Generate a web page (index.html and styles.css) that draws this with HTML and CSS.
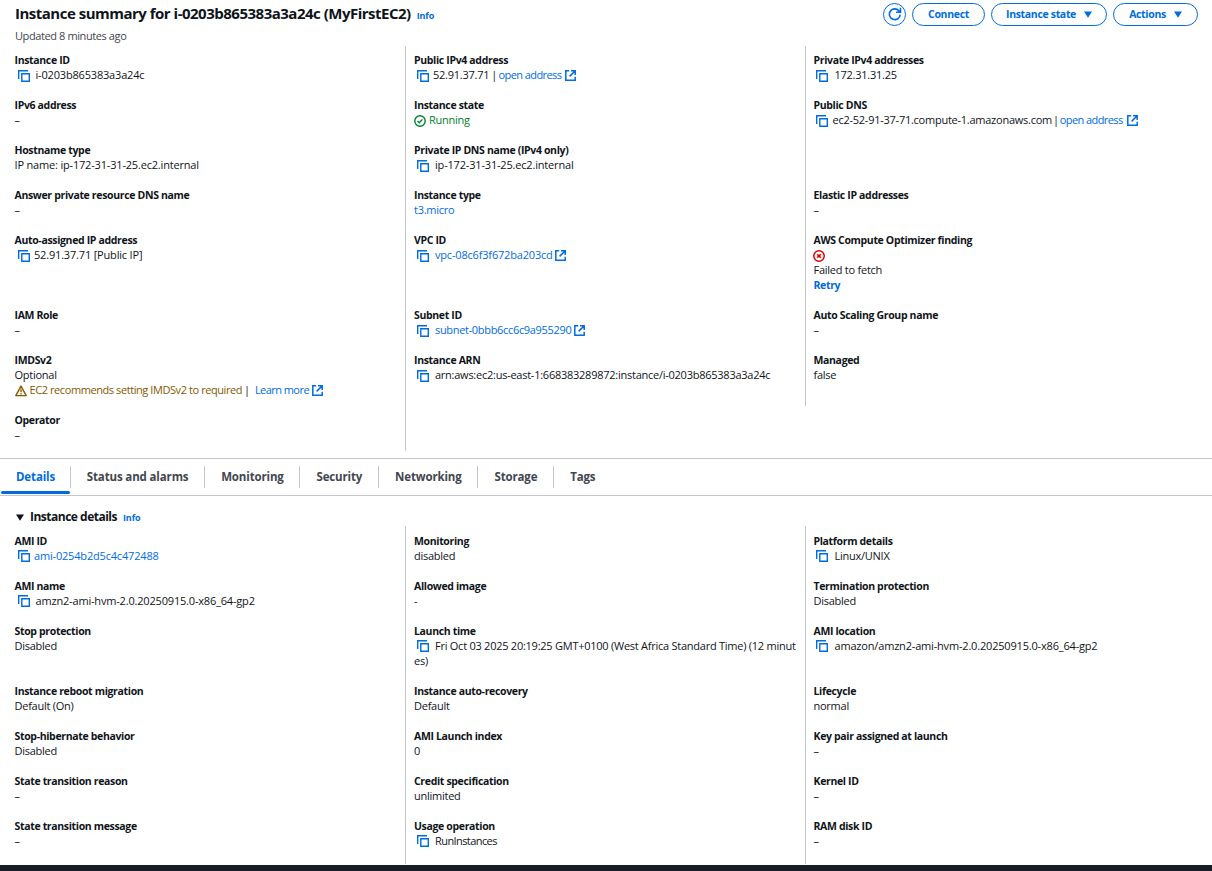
FILE: index.html
```html
<!DOCTYPE html>
<html lang="en">
<head>
<meta charset="utf-8">
<title>Instance summary</title>
<link rel="stylesheet" href="styles.css">
</head>
<body>
<svg class="sprite" aria-hidden="true">
  <symbol id="copy" viewBox="0 0 12 12"><path d="M.7 9V.7H10M3.8 3.8h7.5v7.5H3.8z" fill="none" stroke="currentColor" stroke-width="1.4"/></symbol>
  <symbol id="ext" viewBox="0 0 11 11"><path d="M4.2.8H.8v9.4h9.4V6.8M6 .8h4.2V5M10 1 4.6 6.4" fill="none" stroke="currentColor" stroke-width="1.5"/></symbol>
  <symbol id="ok" viewBox="0 0 12 12"><circle cx="6" cy="6" r="5.2" fill="none" stroke="currentColor" stroke-width="1.4"/><path d="M3.5 6.1 5.3 7.8 8.4 4.4" fill="none" stroke="currentColor" stroke-width="1.4"/></symbol>
  <symbol id="fail" viewBox="0 0 12 12"><circle cx="6" cy="6" r="5.2" fill="none" stroke="currentColor" stroke-width="1.5"/><path d="m4.2 4.2 3.6 3.6m0-3.6L4.2 7.8" fill="none" stroke="currentColor" stroke-width="1.6"/></symbol>
  <symbol id="warn" viewBox="0 0 12 12"><path d="M6 1.1 11.2 10.6H.8z" fill="none" stroke="currentColor" stroke-width="1.4" stroke-linejoin="round"/><path d="M6 4.3v2.9M6 8.1v1.3" stroke="currentColor" stroke-width="1.3"/></symbol>
  <symbol id="reload" viewBox="0 0 14 14"><path d="M12.2 7.6A5.4 5.4 0 1 1 10.8 3.6L12.2 5M12.5 .8v4.4H8.1" fill="none" stroke="currentColor" stroke-width="1.6"/></symbol>
  <symbol id="caret" viewBox="0 0 8 7"><path d="M0 .5h8L4 6.8z" fill="currentColor"/></symbol>
</svg>
<header class="header">
  <div class="titles">
    <h1 class="title"><span class="title-text">Instance summary for i-0203b865383a3a24c (MyFirstEC2)</span><a class="info">Info</a></h1>
    <p class="updated">Updated 8 minutes ago</p>
  </div>
  <div class="actions">
    <button class="btn btn-round"><svg class="reload"><use href="#reload"/></svg></button>
    <button class="btn btn-connect">Connect</button>
    <button class="btn btn-state">Instance state<svg class="caret"><use href="#caret"/></svg></button>
    <button class="btn btn-actions">Actions<svg class="caret"><use href="#caret"/></svg></button>
  </div>
</header>
<section class="grid summary">
  <div class="cell"><b>Instance ID</b><p><svg class="copy"><use href="#copy"/></svg><span class="code">i-0203b865383a3a24c</span></p></div>
  <div class="cell"><b>Public IPv4 address</b><p><svg class="copy tight"><use href="#copy"/></svg><span>52.91.37.71</span><span class="sep">|</span><a class="words">open address</a><svg class="ext"><use href="#ext"/></svg></p></div>
  <div class="cell"><b>Private IPv4 addresses</b><p><svg class="copy"><use href="#copy"/></svg><span>172.31.31.25</span></p></div>

  <div class="cell"><b>IPv6 address</b><p>–</p></div>
  <div class="cell"><b>Instance state</b><p class="success"><svg class="status"><use href="#ok"/></svg><span>Running</span></p></div>
  <div class="cell"><b>Public DNS</b><p><svg class="copy tight"><use href="#copy"/></svg><span>ec2-52-91-37-71.compute-1.amazonaws.com</span><span class="sep">|</span><a class="words">open address</a><svg class="ext"><use href="#ext"/></svg></p></div>

  <div class="cell"><b>Hostname type</b><p class="code">IP name: ip-172-31-31-25.ec2.internal</p></div>
  <div class="cell"><b>Private IP DNS name (IPv4 only)</b><p><svg class="copy"><use href="#copy"/></svg><span class="code">ip-172-31-31-25.ec2.internal</span></p></div>
  <div class="cell"></div>

  <div class="cell"><b>Answer private resource DNS name</b><p>–</p></div>
  <div class="cell"><b>Instance type</b><p><a>t3.micro</a></p></div>
  <div class="cell"><b>Elastic IP addresses</b><p>–</p></div>

  <div class="cell"><b>Auto-assigned IP address</b><p><svg class="copy tight"><use href="#copy"/></svg><span class="code">52.91.37.71 [Public IP]</span></p></div>
  <div class="cell"><b>VPC ID</b><p><svg class="copy"><use href="#copy"/></svg><a class="code">vpc-08c6f3f672ba203cd</a><svg class="ext near"><use href="#ext"/></svg></p></div>
  <div class="cell"><b>AWS Compute Optimizer finding</b><p class="error"><svg class="status"><use href="#fail"/></svg></p><p>Failed to fetch</p><p class="retry"><a>Retry</a></p></div>

  <div class="cell"><b>IAM Role</b><p>–</p></div>
  <div class="cell"><b>Subnet ID</b><p><svg class="copy"><use href="#copy"/></svg><a class="subnet">subnet-0bbb6cc6c9a955290</a><svg class="ext near"><use href="#ext"/></svg></p></div>
  <div class="cell"><b>Auto Scaling Group name</b><p>–</p></div>

  <div class="cell"><b>IMDSv2</b><p>Optional</p><p><svg class="status warning"><use href="#warn"/></svg><span class="warning">EC2 recommends setting IMDSv2 to required</span><span class="bar">|</span><a>Learn more</a><svg class="ext near"><use href="#ext"/></svg></p></div>
  <div class="cell"><b>Instance ARN</b><p><svg class="copy"><use href="#copy"/></svg><span>arn:aws:ec2:us-east-1:668383289872:instance/i-0203b865383a3a24c</span></p></div>
  <div class="cell"><b>Managed</b><p>false</p></div>

  <div class="cell"><b>Operator</b><p>–</p></div>
  <div class="cell"></div>
</section>
<nav class="tabs">
  <a class="tab active">Details</a><a class="tab">Status and alarms</a><a class="tab">Monitoring</a><a class="tab">Security</a><a class="tab">Networking</a><a class="tab">Storage</a><a class="tab">Tags</a>
</nav>
<h2 class="section-title"><svg class="caret"><use href="#caret"/></svg><span>Instance details</span><a class="info">Info</a></h2>
<section class="grid details">
  <div class="cell"><b>AMI ID</b><p><svg class="copy tight"><use href="#copy"/></svg><a class="code">ami-0254b2d5c4c472488</a></p></div>
  <div class="cell"><b>Monitoring</b><p>disabled</p></div>
  <div class="cell"><b>Platform details</b><p><svg class="copy"><use href="#copy"/></svg><span>Linux/UNIX</span></p></div>

  <div class="cell"><b>AMI name</b><p><svg class="copy"><use href="#copy"/></svg><span class="code">amzn2-ami-hvm-2.0.20250915.0-x86_64-gp2</span></p></div>
  <div class="cell"><b>Allowed image</b><p>-</p></div>
  <div class="cell"><b>Termination protection</b><p>Disabled</p></div>

  <div class="cell"><b>Stop protection</b><p>Disabled</p></div>
  <div class="cell"><b>Launch time</b><p><svg class="copy"><use href="#copy"/></svg><span>Fri Oct 03 2025 20:19:25 GMT+0100 (West Africa Standard Time) (12 minut</span></p><p>es)</p></div>
  <div class="cell"><b>AMI location</b><p><svg class="copy"><use href="#copy"/></svg><span class="code">amazon/amzn2-ami-hvm-2.0.20250915.0-x86_64-gp2</span></p></div>

  <div class="cell"><b>Instance reboot migration</b><p>Default (On)</p></div>
  <div class="cell"><b>Instance auto-recovery</b><p>Default</p></div>
  <div class="cell"><b>Lifecycle</b><p>normal</p></div>

  <div class="cell"><b>Stop-hibernate behavior</b><p>Disabled</p></div>
  <div class="cell"><b>AMI Launch index</b><p>0</p></div>
  <div class="cell"><b>Key pair assigned at launch</b><p>–</p></div>

  <div class="cell"><b>State transition reason</b><p>–</p></div>
  <div class="cell"><b>Credit specification</b><p>unlimited</p></div>
  <div class="cell"><b>Kernel ID</b><p>–</p></div>

  <div class="cell"><b>State transition message</b><p>–</p></div>
  <div class="cell"><b>Usage operation</b><p><svg class="copy"><use href="#copy"/></svg><span class="words">RunInstances</span></p></div>
  <div class="cell"><b>RAM disk ID</b><p>–</p></div>
</section>
<footer class="footer"></footer>
</body>
</html>
```
FILE: styles.css
```css
* { box-sizing: border-box; }
body {
  margin: 0;
  height: 871px;
  overflow: hidden;
  display: flex;
  flex-direction: column;
  background: #fff;
  color: #0f141a;
  font: 11px/15px "Open Sans", "Noto Sans", sans-serif;
  letter-spacing: -0.25px;
}
h1, h2, p { margin: 0; }
a { color: #006ce0; }
svg { flex: none; display: block; }
.sprite { position: absolute; width: 0; height: 0; }

.header { height: 46px; flex: none; display: flex; justify-content: space-between; padding: 3px 14px 0 15px; }
.titles { margin-top: -1px; }
.title { display: flex; align-items: baseline; font-size: 15px; line-height: 22px; font-weight: 700; letter-spacing: -0.5px; }
.info { font-size: 9px; font-weight: 700; margin-left: 6px; letter-spacing: -0.1px; }
.updated { margin-top: 1px; color: #424650; letter-spacing: -0.4px; }
.actions { display: flex; gap: 6px; }
.btn {
  height: 23px; padding: 0; border: 1px solid #006ce0; border-radius: 12px; background: #fff; color: #006ce0;
  display: flex; align-items: center; justify-content: center; gap: 8px;
  font: 700 10.5px/15px "Open Sans", "Noto Sans", sans-serif; letter-spacing: -0.33px;
}
.btn-round { width: 23px; }
.btn-round .reload { margin-bottom: 1px; }
.btn-connect { width: 73px; }
.btn-state { width: 116px; }
.btn-actions { width: 85px; }
.reload { width: 14px; height: 14px; }
.caret { width: 8px; height: 7px; }

.grid { flex: none; display: grid; grid-template-columns: 405px 400px 1fr; }
.summary { grid-template-rows: 45px 45px 45px 45px 75px 45px 60px 45px; height: 412px; }
.details { grid-template-rows: 45px 45px 60px 45px 45px 45px 53px; height: 339px; }
.cell { padding: 7px 0 0 8px; border-left: 1px solid #c6c6cd; white-space: nowrap; }
.summary .cell { padding-top: 6px; }
.cell:nth-child(3n) { padding-left: 7.5px; }
.cell:nth-child(3n+1) { border-left: 0; padding-left: 14.5px; }
.cell b, .cell p { display: flex; align-items: center; height: 15px; }
.cell b, .cell .retry { padding-top: 2px; font-size: 10.5px; font-weight: 700; letter-spacing: -0.34px; }
.copy { width: 12px; height: 12px; margin: 1px 6px 0 3px; color: #006ce0; }
.cell:nth-child(3n) .copy { margin-left: 2.5px; margin-right: 6.5px; }
.cell:nth-child(3n+1) .copy { margin-left: 3.5px; margin-right: 5.5px; }
.cell .copy.tight { margin-right: 4px; }
.cell:nth-child(3n) .copy.tight { margin-right: 4.5px; }
.ext { width: 11px; height: 11px; margin: 1px 0 0 4px; color: #006ce0; }
.ext.near { margin-left: 2.5px; }
.status { width: 12px; height: 12px; margin: 1px 3px 0 0; }
.summary .copy, .summary .status { margin-top: 3px; }
.success { color: #00802f; }
.error { color: #db0000; }
.error .status { margin-left: -0.5px; }
.warning { color: #855900; letter-spacing: -0.42px; }
.words { letter-spacing: -0.58px; }
.code { letter-spacing: -0.18px; }
.subnet { letter-spacing: -0.32px; }
.sep { margin: 0 1.5px 0 2px; }
.cell:nth-child(3n) .sep { margin: 0 1px; }
.bar { margin: 0 5px 0 2px; }
.bar + a { letter-spacing: -0.55px; }

.tabs { height: 38px; flex: none; display: flex; align-items: center; border-top: 1px solid #c6c6cd; border-bottom: 1px solid #c6c6cd; }
.tab { padding: 0 15.8px 0 16px; border-right: 1px solid #c6c6cd; height: 22px; line-height: 22px; font-size: 11.5px; font-weight: 700; color: #424650; letter-spacing: -0.14px; }
.tab:last-child { border: 0; }
.active { color: #006ce0; position: relative; padding-right: 14.8px; }
.active::after { content: ""; position: absolute; left: 1px; right: 0; bottom: -6px; height: 3px; border-radius: 2px; background: #006ce0; }

.section-title { flex: none; height: 30px; padding: 12px 0 0 16px; display: flex; align-items: baseline; font-size: 12px; line-height: 18px; letter-spacing: -0.5px; }
.section-title .caret { margin: 0 6px 2px 0; }
.footer { flex: 1; background: #161d26; }
```
